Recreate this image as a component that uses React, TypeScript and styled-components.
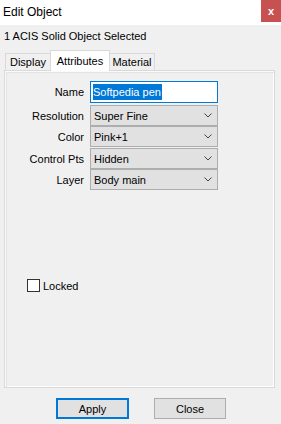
import React from "react";
import styled, { createGlobalStyle } from "styled-components";

const Global = createGlobalStyle`
  html, body { margin: 0; padding: 0; background: #f0f0f0; }
  * { box-sizing: border-box; }
`;

const Window = styled.div`
  width: 281px;
  height: 424px;
  background: #f0f0f0;
  font-family: "Liberation Sans", Arial, sans-serif;
  font-size: 11px;
  color: #000;
  display: flex;
  flex-direction: column;
  overflow: hidden;
`;

const TitleBar = styled.div`
  height: 25px;
  background: #fff;
  display: flex;
  align-items: flex-start;
  justify-content: space-between;
`;

const TitleText = styled.div`
  font-size: 12px;
  padding: 5px 0 0 3px;
  line-height: 14px;
`;

const CloseX = styled.div`
  width: 20px;
  height: 22px;
  background: #c75050;
  color: #fff;
  font-weight: bold;
  font-size: 11px;
  display: flex;
  align-items: center;
  justify-content: center;
`;

const Status = styled.div`
  height: 25px;
  padding: 4px 0 0 4px;
  line-height: 14px;
`;

const TabRow = styled.div`
  display: flex;
  align-items: flex-end;
  height: 21px;
  padding-left: 5px;
  margin-bottom: -1px;
  position: relative;
  z-index: 1;
`;

const Tab = styled.div<{ $active?: boolean; $w: number }>`
  width: ${(p) => p.$w}px;
  height: ${(p) => (p.$active ? 21 : 18)}px;
  margin-left: ${(p) => (p.$active ? -1 : 0)}px;
  margin-right: ${(p) => (p.$active ? -1 : 0)}px;
  border: 1px solid #d9d9d9;
  border-bottom: ${(p) => (p.$active ? "none" : "1px solid #d9d9d9")};
  background: ${(p) => (p.$active ? "#fff" : "#f0f0f0")};
  display: flex;
  align-items: center;
  justify-content: center;
  line-height: 14px;
  position: relative;
  z-index: ${(p) => (p.$active ? 2 : 0)};
`;

const TabPage = styled.div`
  margin: 0 6px 0 4px;
  height: 318px;
  border: 1px solid #d9d9d9;
  background: #f0f0f0;
  box-shadow: inset 1px 1px 0 #fafafa, inset 2px 2px 0 #e3e3e3, inset -1px -1px 0 #fff;
  display: flex;
  flex-direction: column;
  padding-top: 10px;
`;

const Row = styled.div<{ $gap?: number }>`
  display: flex;
  align-items: center;
  margin-top: ${(p) => p.$gap ?? 0}px;
`;

const Label = styled.div`
  width: 79px;
  text-align: right;
  margin-right: 6px;
  line-height: 14px;
`;

const TextBox = styled.div`
  width: 128px;
  height: 22px;
  border: 1px solid #0078d7;
  background: #fff;
  padding: 2px 0 0 2px;
  font-size: 11px;
`;

const Selection = styled.span`
  display: inline-block;
  background: #0078d7;
  color: #fff;
  line-height: 16px;
  height: 16px;
  padding-right: 1px;
`;

const Combo = styled.div`
  width: 128px;
  height: 21px;
  border: 1px solid #adadad;
  background: #e1e1e1;
  display: flex;
  align-items: center;
  justify-content: space-between;
  padding: 0 5px 0 3px;
  line-height: 14px;
`;

const CheckRow = styled.div`
  display: flex;
  align-items: center;
  margin: 89px 0 0 22px;
`;

const CheckBox = styled.div`
  width: 13px;
  height: 13px;
  border: 1px solid #333;
  background: #fff;
  margin-right: 3px;
`;

const Footer = styled.div`
  flex: 1;
  display: flex;
  justify-content: center;
  gap: 25px;
  padding-top: 10px;
  padding-left: 1px;
`;

const Button = styled.div<{ $default?: boolean }>`
  width: ${(p) => (p.$default ? 73 : 72)}px;
  height: 21px;
  background: #e1e1e1;
  border: ${(p) => (p.$default ? "2px solid #0078d7" : "1px solid #adadad")};
  display: flex;
  align-items: center;
  justify-content: center;
  line-height: 14px;
`;

const Chevron = () => (
  <svg width="8" height="5" viewBox="0 0 8 5">
    <path d="M0.5 0.5 L4 4 L7.5 0.5" fill="none" stroke="#444" strokeWidth="1" />
  </svg>
);

const combos: [string, string, number][] = [
  ["Resolution", "Super Fine", 2],
  ["Color", "Pink+1", 0],
  ["Control Pts", "Hidden", 1],
  ["Layer", "Body main", 0],
];

export default function App() {
  return (
    <Window>
      <Global />
      <TitleBar>
        <TitleText>Edit Object</TitleText>
        <CloseX>x</CloseX>
      </TitleBar>
      <Status>1 ACIS Solid Object Selected</Status>
      <TabRow>
        <Tab $w={46}>Display</Tab>
        <Tab $w={60} $active>Attributes</Tab>
        <Tab $w={46}>Material</Tab>
      </TabRow>
      <TabPage>
        <Row>
          <Label>Name</Label>
          <TextBox>
            <Selection>Softpedia pen</Selection>
          </TextBox>
        </Row>
        {combos.map(([label, value, gap]) => (
          <Row key={label} $gap={gap}>
            <Label>{label}</Label>
            <Combo>
              <span>{value}</span>
              <Chevron />
            </Combo>
          </Row>
        ))}
        <CheckRow>
          <CheckBox />
          <span>Locked</span>
        </CheckRow>
      </TabPage>
      <Footer>
        <Button $default>Apply</Button>
        <Button>Close</Button>
      </Footer>
    </Window>
  );
}
